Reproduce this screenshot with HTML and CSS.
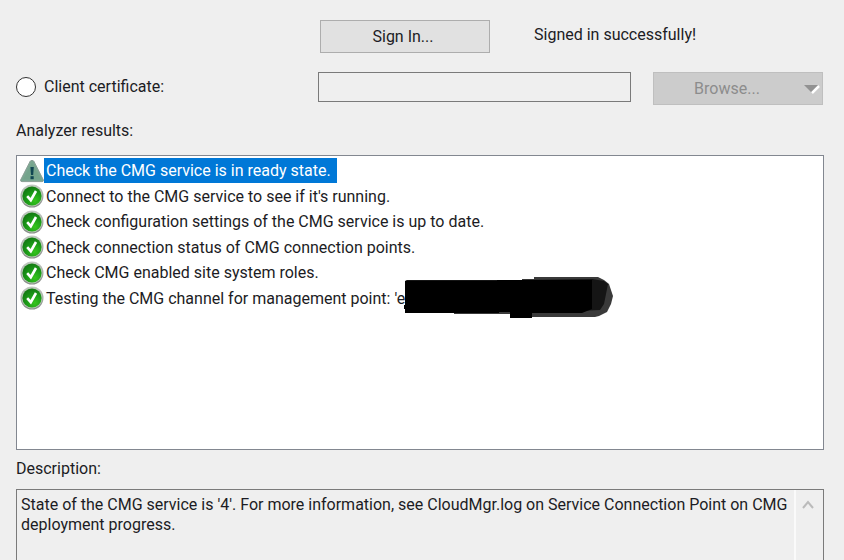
FILE: index.html
```html
<!DOCTYPE html>
<html lang="en">
<head>
    <meta charset="UTF-8">
    <meta name="viewport" content="width=device-width, initial-scale=1.0">
    <title>Cloud Management Gateway Connection Analyzer</title>
    <link rel="stylesheet" href="styles.css">
</head>
<body>
    <!-- shared status icons -->
    <svg class="icon-defs" width="0" height="0" aria-hidden="true">
        <defs>
            <radialGradient id="green" cx="0.65" cy="0.75" r="0.8">
                <stop offset="0" stop-color="#35c51c"/>
                <stop offset="0.5" stop-color="#1c9c18"/>
                <stop offset="1" stop-color="#127512"/>
            </radialGradient>
            <linearGradient id="rim" x1="0" y1="0" x2="0" y2="1">
                <stop offset="0" stop-color="#c5cbc5"/>
                <stop offset="1" stop-color="#858b85"/>
            </linearGradient>
        </defs>
        <symbol id="ok" viewBox="0 0 24 24">
            <circle cx="12" cy="12" r="11.5" fill="url(#rim)"/>
            <circle cx="12" cy="12" r="10.4" fill="#b9c9b7"/>
            <circle cx="12" cy="12" r="9.6" fill="url(#green)"/>
            <path d="M7.2 12.2l3.6 4L16 7" fill="none" stroke="#fff" stroke-width="2.6"/>
        </symbol>
        <symbol id="warning" viewBox="0 0 24 24">
            <path d="M10.2 2.2Q12 .4 13.8 2.2L23.4 21Q23.6 22.6 22 22.6H2Q.4 22.6.6 21z" fill="#7ba792" stroke="#8b9f96"/>
            <path d="M12 4L3 20.5h18z" fill="#74a48c"/>
            <path d="M10.4 8h3.4l-.6 8h-2.2z" fill="#114653"/>
            <rect x="10.5" y="17.2" width="3.2" height="3" fill="#114653"/>
        </symbol>
    </svg>

    <form class="analyzer">
        <div class="options">
            <button type="button" class="btn sign-in">Sign In...</button>
            <output class="status">Signed in successfully!</output>

            <div class="choice">
                <input type="radio" id="client-cert" name="auth">
                <label for="client-cert">Client certificate:</label>
            </div>
            <input type="text" class="cert-path" aria-label="Client certificate" disabled>
            <button type="button" class="btn browse" disabled>
                <span>Browse...</span>
                <svg width="16" height="10" viewBox="0 0 16 10" aria-hidden="true">
                    <path d="M8 9l7-7" stroke="#fff" stroke-width="2.5"/>
                    <path d="M0 1h14L7 8z" fill="#929292"/>
                </svg>
            </button>
        </div>

        <div class="caption" id="results-label">Analyzer results:</div>
        <div class="results">
            <ul class="result-list" aria-labelledby="results-label">
                <li class="selected"><svg class="icon"><use href="#warning"/></svg><span>Check the CMG service is in ready state.</span></li>
                <li><svg class="icon"><use href="#ok"/></svg><span>Connect to the CMG service to see if it's running.</span></li>
                <li><svg class="icon"><use href="#ok"/></svg><span>Check configuration settings of the CMG service is up to date.</span></li>
                <li><svg class="icon"><use href="#ok"/></svg><span>Check connection status of CMG connection points.</span></li>
                <li><svg class="icon"><use href="#ok"/></svg><span>Check CMG enabled site system roles.</span></li>
                <li>
                    <svg class="icon"><use href="#ok"/></svg><span>Testing the CMG channel for management point: 'e</span>
                    <svg class="redaction" width="209" height="42" viewBox="0 0 209 42" aria-hidden="true">
                        <path d="M118 3V2h12V0h64l6 3 5 4 4 12-2 8-4 8-8 4-4 1h-63v-3H50V3z" fill="#3a3a3a"/>
                        <path d="M1 3h117l70-1 12 2 4 3-4 20-4 6-68 3v5h-22v-6H60z" fill="#151515"/>
                        <path d="M1 4h92V3h95v29l-10 4h-50v5h-22v-6H95v1H1v-4H0v-4h1z" fill="#000"/>
                    </svg>
                </li>
            </ul>
        </div>

        <label class="caption" for="description">Description:</label>
        <div class="description">
            <textarea id="description" readonly>State of the CMG service is '4'. For more information, see CloudMgr.log on Service Connection Point on CMG deployment progress.</textarea>
            <div class="scrollbar">
                <button type="button" aria-label="Scroll up" disabled>
                    <svg width="12" height="10" viewBox="0 0 12 10" aria-hidden="true">
                        <path d="M1 8l5-6 5 6" fill="none" stroke="#bbb" stroke-width="2"/>
                    </svg>
                </button>
            </div>
        </div>
    </form>
</body>
</html>
```

FILE: styles.css
```css
* {
    box-sizing: border-box;
}
body {
    height: 100vh;
    margin: 0;
    overflow: hidden;
    background-color: #efefef;
    color: #1c1c24;
    font-family: Roboto, "Liberation Sans", sans-serif;
    font-size: 16px;
    line-height: 20px;
}
button, input, textarea {
    margin: 0;
    color: inherit;
    font: inherit;
}
.icon-defs {
    position: absolute;
}
.analyzer {
    display: flex;
    flex-direction: column;
    height: 100%;
    padding: 20px 20px 0 16px;
}

/* sign in / certificate rows */
.options {
    display: grid;
    grid-template-columns: 302px 1fr 170px;
    row-gap: 19px;
    margin-right: 1px;
}
.btn {
    height: 33px;
    padding: 0;
    border: 1px solid #adadad;
    background-color: #e1e1e1;
}
.sign-in {
    grid-column: 2;
    grid-row: 1;
    width: 170px;
    margin-left: 2px;
    padding-right: 4px;
}
.status {
    grid-column: 2 / 4;
    grid-row: 1;
    justify-self: start;
    margin-left: 216px;
    padding-top: 5px;
}
.choice {
    display: flex;
    grid-column: 1;
    grid-row: 2;
    gap: 8px;
    align-items: center;
    height: 30px;
}
.choice input {
    appearance: none;
    width: 20px;
    height: 20px;
    border: 1px solid #333;
    border-radius: 50%;
    background-color: #fff;
}
.cert-path {
    grid-column: 2;
    grid-row: 2;
    height: 30px;
    margin-right: 22px;
    border: 1px solid #7a7a7a;
    background-color: #efefef;
}
.browse {
    display: flex;
    grid-column: 3;
    grid-row: 2;
    align-items: center;
    border-color: #bfbfbf;
    background-color: #ccc;
    color: #8c8c8c;
}
.browse span {
    flex: 1;
    padding-right: 4px;
}
.browse svg {
    margin-right: 2px;
}

.caption {
    display: block;
    padding: 16px 0 14px;
}

/* results list */
.results {
    flex: none;
    height: 295px;
    padding: 2px 3px;
    border: 1px solid #828790;
    background-color: #fff;
}
.result-list {
    display: grid;
    grid-auto-rows: 1fr;
    height: 153px;
    margin: 0;
    padding: 0;
    list-style: none;
}
.result-list li {
    display: flex;
    align-items: center;
    min-height: 0;
    white-space: nowrap;
}
.result-list span {
    padding: 3px 6px 2px 2px;
}
.icon {
    flex: none;
    width: 24px;
    height: 24px;
}
.selected span {
    background-color: #0078d7;
    color: #fff;
}
.redaction {
    flex: none;
    margin: -8px 0 -8px -7px;
}

/* description box */
.results + .caption {
    padding: 9px 0 10px;
}
.description {
    display: flex;
    flex: 1;
    min-height: 0;
    border: 1px solid #7a7a7a;
    border-bottom: 0;
}
.description textarea {
    flex: 1;
    padding: 5px 0 0 4px;
    border: 0;
    outline: 0;
    background-color: transparent;
    resize: none;
    overflow: hidden;
}
.scrollbar {
    width: 29px;
    border-left: 2px solid #fafafa;
}
.scrollbar button {
    width: 100%;
    height: 30px;
    padding: 0 4px 0 0;
    border: 0;
    background-color: transparent;
}
```
